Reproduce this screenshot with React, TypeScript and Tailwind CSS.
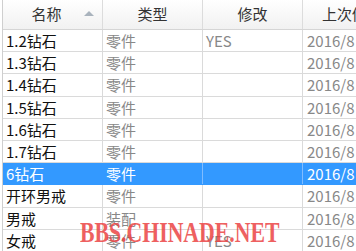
type Row = {
  name: string;
  kind: string;
  modified: string;
  date: string;
  selected?: boolean;
};

const rows: Row[] = [
  { name: "1.2钻石", kind: "零件", modified: "YES", date: "2016/8" },
  { name: "1.3钻石", kind: "零件", modified: "", date: "2016/8" },
  { name: "1.4钻石", kind: "零件", modified: "", date: "2016/8" },
  { name: "1.5钻石", kind: "零件", modified: "", date: "2016/8" },
  { name: "1.6钻石", kind: "零件", modified: "", date: "2016/8" },
  { name: "1.7钻石", kind: "零件", modified: "", date: "2016/8" },
  { name: "6钻石", kind: "零件", modified: "", date: "2016/8", selected: true },
  { name: "开环男戒", kind: "零件", modified: "", date: "2016/8" },
  { name: "男戒", kind: "装配", modified: "", date: "2016/8" },
  { name: "女戒", kind: "零件", modified: "YES", date: "2016/8" },
];

const font = {
  fontFamily: '"Noto Sans CJK SC", "Open Sans", sans-serif',
};

export default function App() {
  return (
    <div
      className="relative w-[356px] h-[251px] overflow-hidden bg-white pl-[2px] text-[15px]"
      style={font}
    >
      <div className="border-l border-[#cfcfcf] h-full">
        {/* header */}
        <div className="flex h-[30px] border-b border-[#d5d5d5] bg-gradient-to-b from-white to-[#f1f1f1] text-[#333]">
          <div className="relative w-[100px] shrink-0 border-r border-[#dcdcdc] flex items-center justify-center pr-[12px]">
            名称
            <span className="absolute left-[81px] top-[11px] w-0 h-0 border-l-[5px] border-r-[5px] border-b-[5px] border-l-transparent border-r-transparent border-b-[#a9b3bd]" />
          </div>
          <div className="w-[100px] shrink-0 border-r border-[#dcdcdc] flex items-center justify-center">
            类型
          </div>
          <div className="w-[100px] shrink-0 border-r border-[#dcdcdc] flex items-center justify-center">
            修改
          </div>
          <div className="flex-1 flex items-center pl-[19px] whitespace-nowrap">
            上次修改
          </div>
        </div>

        {/* rows */}
        {rows.map((r) => (
          <div
            key={r.name}
            className={
              r.selected
                ? "flex h-[22.2px] leading-[22px] border-b border-[#3399ff] bg-[#3399ff] text-white"
                : "flex h-[22.2px] leading-[22px] border-b border-[#dadada] text-[#888]"
            }
          >
            <div
              className={
                r.selected
                  ? "w-[100px] shrink-0 pl-[3px] border-r border-[#3399ff] whitespace-nowrap"
                  : "w-[100px] shrink-0 pl-[3px] border-r border-[#dadada] text-[#111] whitespace-nowrap"
              }
            >
              {r.name}
            </div>
            <div
              className={
                r.selected
                  ? "w-[100px] shrink-0 pl-[3px] border-r border-[#7fbcff]"
                  : "w-[100px] shrink-0 pl-[3px] border-r border-[#dadada]"
              }
            >
              {r.kind}
            </div>
            <div
              className={
                r.selected
                  ? "w-[100px] shrink-0 pl-[3px] border-r border-[#7fbcff]"
                  : "w-[100px] shrink-0 pl-[3px] border-r border-[#dadada]"
              }
            >
              {r.modified}
            </div>
            <div className="flex-1 pl-[4px] whitespace-nowrap">{r.date}</div>
          </div>
        ))}
      </div>

      {/* watermark */}
      <div
        className="absolute left-[80px] top-[214px] origin-left scale-x-[0.75] text-[29px] leading-[36px] font-bold text-[#ec4545] opacity-85 whitespace-nowrap"
        style={{ fontFamily: '"Liberation Serif", "DejaVu Serif", serif' }}
      >
        BBS.CHINADE.NET
      </div>
    </div>
  );
}
